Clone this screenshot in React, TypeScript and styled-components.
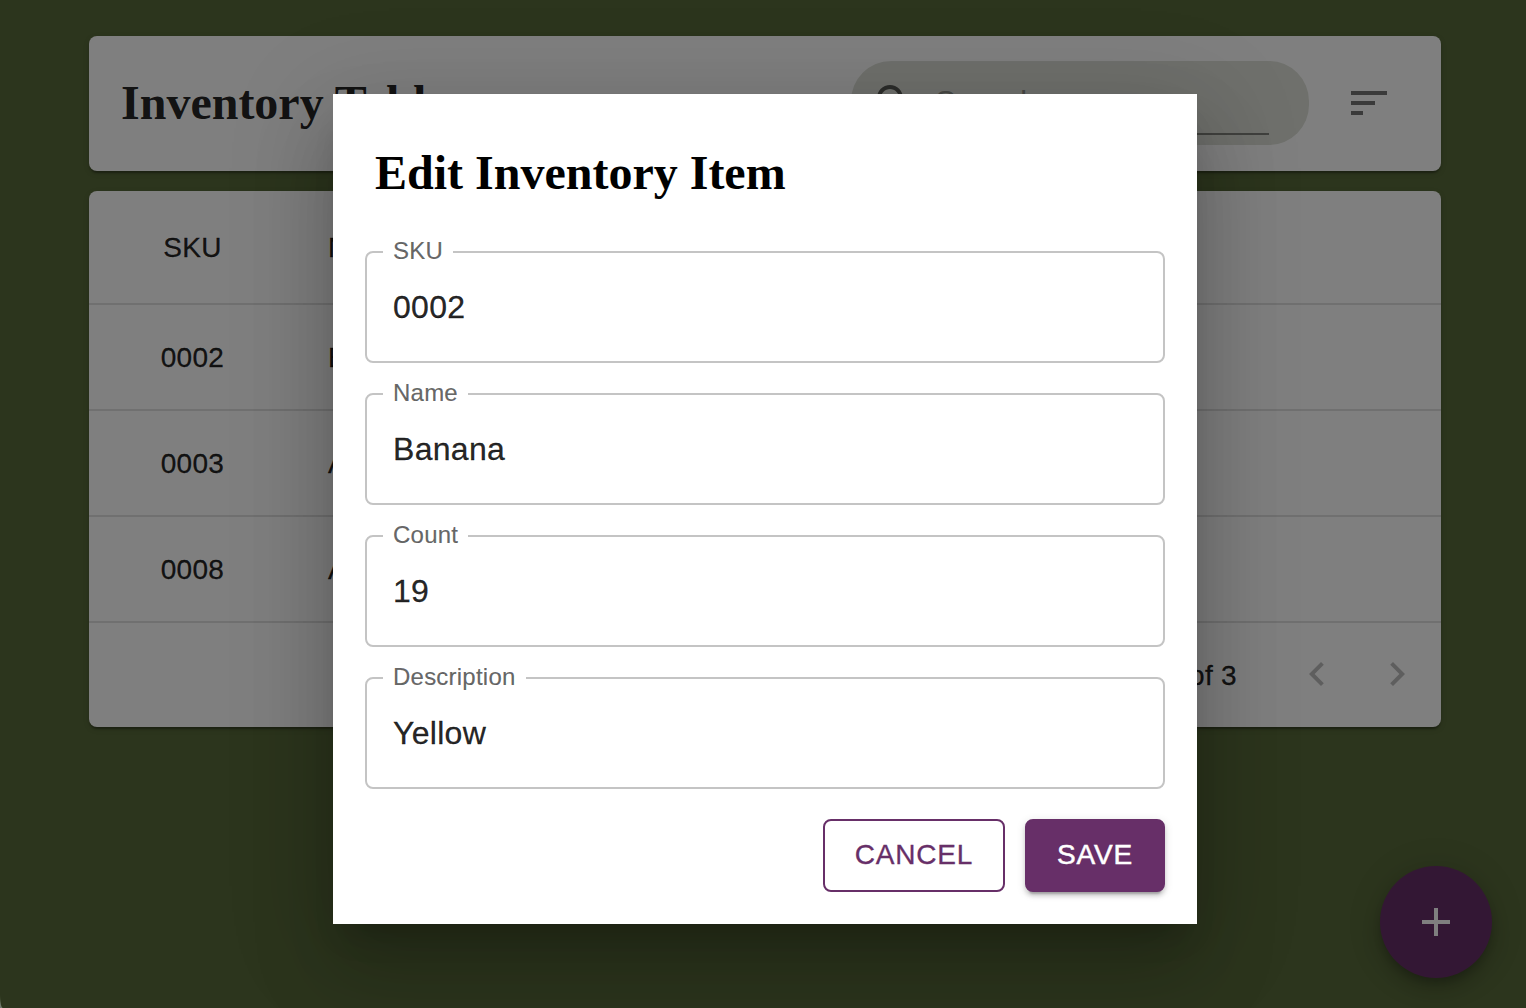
import React from "react";
import styled, { createGlobalStyle } from "styled-components";

const sans = `"Liberation Sans", Helvetica, Arial, sans-serif`;
const serif = `"Liberation Serif", "Times New Roman", serif`;
const purple = "#672f68";

const GlobalStyle = createGlobalStyle`
  *, *::before, *::after { box-sizing: border-box; }
  html { background: #6f786c; }
  body { margin: 0; overflow: hidden; font-family: ${sans}; color: rgba(0, 0, 0, 0.87); }
`;

const Page = styled.div`
  position: relative;
  display: flex;
  flex-direction: column;
  gap: 20px;
  width: 100vw;
  height: 100vh;
  padding: 36px 85px 0 89px;
  overflow: hidden;
  background: #586a3a;
  border-bottom-left-radius: 3px 13px;
`;

const Card = styled.section`
  border-radius: 8px;
  background: #fff;
  box-shadow: 0 4px 2px -2px rgba(0, 0, 0, 0.2), 0 2px 2px rgba(0, 0, 0, 0.14),
    0 2px 6px rgba(0, 0, 0, 0.12);
`;

const Toolbar = styled(Card)`
  display: flex;
  align-items: center;
  height: 135px;
  flex: none;
  padding: 0 48px 0 32px;
`;

const Title = styled.h2`
  margin: 0;
  font: bold 48px/56px ${serif};
`;

const PageTitle = styled(Title)`
  padding-bottom: 2px;
`;

const SearchBox = styled.div`
  display: flex;
  align-items: center;
  gap: 16px;
  width: 458px;
  height: 84px;
  margin: 0 36px 1px auto;
  padding: 0 40px 0 20px;
  border-radius: 40px;
  background: rgba(88, 106, 58, 0.2);
  color: rgba(0, 0, 0, 0.6);
`;

const SearchInput = styled.input`
  flex: 1;
  min-width: 0;
  height: 64px;
  padding: 8px 0 8px;
  border: 0;
  border-bottom: 2px solid rgba(0, 0, 0, 0.42);
  background: transparent;
  font: 32px ${sans};
  letter-spacing: 0.3px;
  outline: 0;
  &::placeholder { color: rgba(0, 0, 0, 0.87); opacity: 0.42; }
`;

const Icon = styled.svg`
  display: block;
  flex: none;
  width: 48px;
  height: 48px;
  fill: currentColor;
`;

const FilterButton = styled.button`
  display: flex;
  border: 0;
  margin: 0 0 1px;
  padding: 0;
  background: none;
  color: rgba(0, 0, 0, 0.54);
`;

const Table = styled.div`
  font-size: 28px;
  letter-spacing: 0.3px;
  -webkit-text-stroke: 0.3px currentColor;
`;

const Row = styled.div<{ $head?: boolean }>`
  display: grid;
  grid-template-columns: 207px 1fr;
  align-items: center;
  height: ${(p) => (p.$head ? 114 : 106)}px;
  padding-top: 2px;
  border-bottom: 2px solid #e0e0e0;
`;

const Cell = styled.div<{ $center?: boolean }>`
  padding: 0 32px;
  text-align: ${(p) => (p.$center ? "center" : "left")};
`;

const Pagination = styled.div`
  display: flex;
  align-items: center;
  justify-content: flex-end;
  height: 104px;
  padding-right: 4px;
`;

const Range = styled.span`
  margin-right: 40px;
  padding-top: 2px;
`;

const PageButton = styled.button`
  display: flex;
  align-items: center;
  justify-content: center;
  width: 80px;
  height: 80px;
  padding: 0;
  margin-bottom: 2px;
  border: 0;
  background: none;
  color: rgba(0, 0, 0, 0.26);
`;

const Fab = styled.button`
  position: absolute;
  right: 34px;
  bottom: 30px;
  display: flex;
  align-items: center;
  justify-content: center;
  width: 112px;
  height: 112px;
  padding: 0;
  border: 0;
  border-radius: 50%;
  background: ${purple};
  color: #fff;
  box-shadow: 0 6px 10px -2px rgba(0, 0, 0, 0.2), 0 12px 20px rgba(0, 0, 0, 0.14),
    0 2px 36px rgba(0, 0, 0, 0.12);
`;

const Backdrop = styled.div`
  position: absolute;
  inset: 0;
  display: flex;
  justify-content: center;
  align-items: flex-start;
  padding: 94px 0 0 4px;
  background: rgba(0, 0, 0, 0.5);
`;

const Dialog = styled.form`
  display: flex;
  flex-direction: column;
  width: 864px;
  height: 830px;
  padding: 32px;
  background: #fff;
  box-shadow: 0 22px 30px -14px rgba(0, 0, 0, 0.2), 0 48px 76px 6px rgba(0, 0, 0, 0.14),
    0 18px 92px 16px rgba(0, 0, 0, 0.12);
`;

const DialogTitle = styled(Title)`
  height: 114px;
  padding: 19px 0 0 10px;
  color: #000;
`;

const Fields = styled.div`
  display: flex;
  flex-direction: column;
  gap: 19px;
`;

const Outline = styled.fieldset`
  height: 123px;
  min-width: 0;
  margin: 0;
  padding: 0 26px 0 16px;
  border: 2px solid #c4c4c4;
  border-radius: 8px;
`;

const Label = styled.legend`
  height: 24px;
  padding: 0 10px;
  color: rgba(0, 0, 0, 0.6);
  font-size: 24px;
  line-height: 22px;
  letter-spacing: 0.225px;
  -webkit-text-stroke: 0.2px currentColor;
`;

const Input = styled.input`
  display: block;
  width: 100%;
  height: 86px;
  padding: 0 0 0 10px;
  border: 0;
  background: transparent;
  color: rgba(0, 0, 0, 0.87);
  font: 32px ${sans};
  letter-spacing: 0.3px;
  -webkit-text-stroke: 0.3px currentColor;
  outline: 0;
`;

const Actions = styled.div`
  display: flex;
  justify-content: flex-end;
  gap: 20px;
  margin-top: 30px;
`;

const Button = styled.button<{ $filled?: boolean }>`
  width: ${(p) => (p.$filled ? 140 : 182)}px;
  height: 73px;
  padding: 0 0 2px;
  border: 2px solid ${purple};
  border-radius: 8px;
  background: ${(p) => (p.$filled ? purple : "transparent")};
  color: ${(p) => (p.$filled ? "#fff" : purple)};
  font: 28px/49px ${sans};
  letter-spacing: 0.8px;
  white-space: nowrap;
  -webkit-text-stroke: ${(p) => (p.$filled ? 0.5 : 0.3)}px currentColor;
  box-shadow: ${(p) =>
    p.$filled
      ? "0 6px 2px -4px rgba(0,0,0,.2), 0 4px 4px rgba(0,0,0,.14), 0 2px 10px rgba(0,0,0,.12)"
      : "none"};
`;

const items = [
  { sku: "0002", name: "Banana" },
  { sku: "0003", name: "Apple" },
  { sku: "0008", name: "Avocado" },
];

const fields = [
  { label: "SKU", value: "0002" },
  { label: "Name", value: "Banana" },
  { label: "Count", value: "19" },
  { label: "Description", value: "Yellow" },
];

const Glyph = ({ d }: { d: string }) => (
  <Icon viewBox="0 0 24 24" aria-hidden>
    <path d={d} />
  </Icon>
);

export default function App() {
  return (
    <>
      <GlobalStyle />
      <Page>
        <Toolbar>
          <PageTitle>Inventory Table</PageTitle>
          <SearchBox>
            <Glyph d="M15.5 14h-.79l-.28-.27C15.41 12.59 16 11.11 16 9.5 16 5.91 13.09 3 9.5 3S3 5.91 3 9.5 5.91 16 9.5 16c1.61 0 3.09-.59 4.23-1.57l.27.28v.79l5 4.99L20.49 19l-4.99-5zm-6 0C7.01 14 5 11.99 5 9.5S7.01 5 9.5 5 14 7.01 14 9.5 11.99 14 9.5 14z" />
            <SearchInput placeholder="Search" />
          </SearchBox>
          <FilterButton type="button" aria-label="Sort">
            <Glyph d="M3 18h6v-2H3v2zM3 6v2h18V6H3zm0 7h12v-2H3v2z" />
          </FilterButton>
        </Toolbar>
        <Card>
          <Table>
            <Row $head>
              <Cell $center>SKU</Cell>
              <Cell>Name</Cell>
            </Row>
            {items.map((item) => (
              <Row key={item.sku}>
                <Cell $center>{item.sku}</Cell>
                <Cell>{item.name}</Cell>
              </Row>
            ))}
            <Pagination>
              <Range>1-3 of 3</Range>
              <PageButton disabled aria-label="Previous page">
                <Glyph d="M15.41 16.59 10.83 12l4.58-4.59L14 6l-6 6 6 6z" />
              </PageButton>
              <PageButton disabled aria-label="Next page">
                <Glyph d="M8.59 16.59 13.17 12 8.59 7.41 10 6l6 6-6 6z" />
              </PageButton>
            </Pagination>
          </Table>
        </Card>
        <Fab aria-label="Add item">
          <Glyph d="M19 13h-6v6h-2v-6H5v-2h6V5h2v6h6v2z" />
        </Fab>
        <Backdrop>
          <Dialog>
            <DialogTitle>Edit Inventory Item</DialogTitle>
            <Fields>
              {fields.map((field) => (
                <Outline key={field.label}>
                  <Label>{field.label}</Label>
                  <Input aria-label={field.label} defaultValue={field.value} />
                </Outline>
              ))}
            </Fields>
            <Actions>
              <Button type="button">CANCEL</Button>
              <Button type="button" $filled>
                SAVE
              </Button>
            </Actions>
          </Dialog>
        </Backdrop>
      </Page>
    </>
  );
}
